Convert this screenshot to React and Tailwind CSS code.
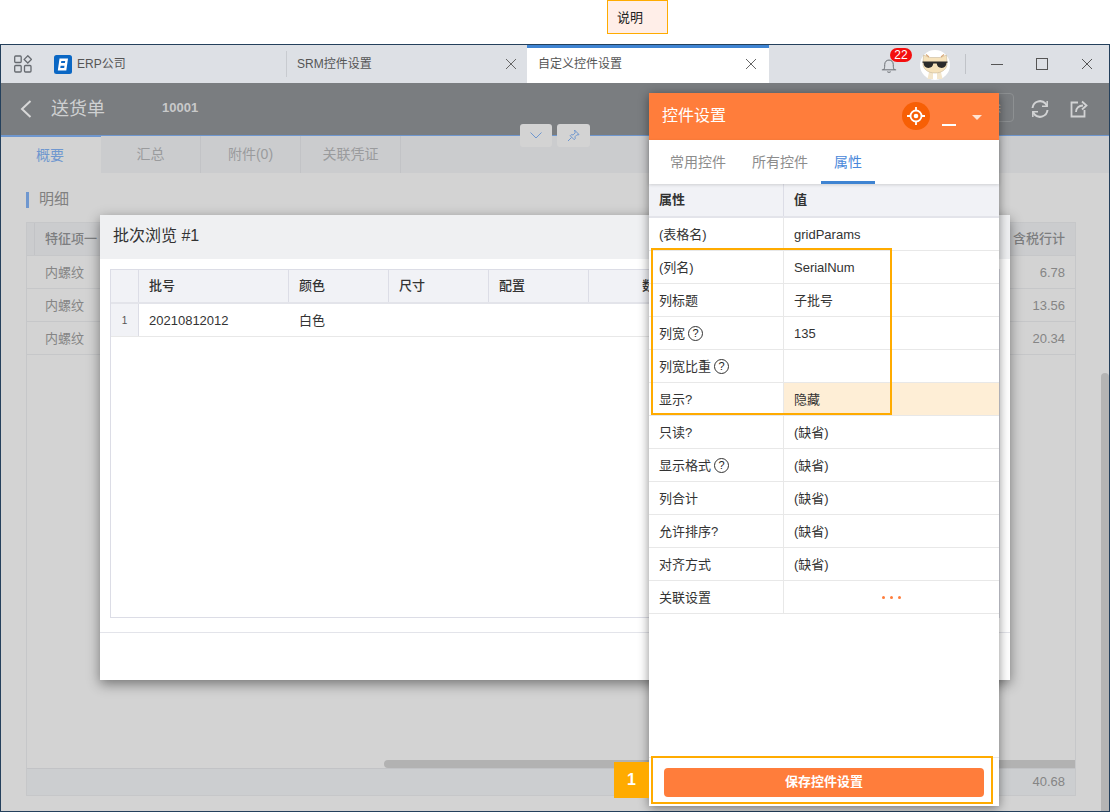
import React from "react";

const FONT = '"Liberation Sans","Noto Sans CJK SC",sans-serif';

const rows = [
  ["(表格名)", "gridParams"],
  ["(列名)", "SerialNum"],
  ["列标题", "子批号"],
  ["列宽", "135", true],
  ["列宽比重", "", true],
  ["显示?", "隐藏", false, true],
  ["只读?", "(缺省)"],
  ["显示格式", "(缺省)", true],
  ["列合计", "(缺省)"],
  ["允许排序?", "(缺省)"],
  ["对齐方式", "(缺省)"],
];

function Close({ className }) {
  return (
    <svg className={className} width="12" height="12" viewBox="0 0 12 12" fill="none" stroke="currentColor" strokeWidth="1">
      <path d="M1 1l10 10M11 1L1 11" />
    </svg>
  );
}

function AppsIcon() {
  return (
    <svg width="18" height="18" viewBox="0 0 18 18" fill="none" stroke="#666a70" strokeWidth="1.3">
      <rect x="0.7" y="1" width="6.5" height="6.5" rx="1" />
      <rect x="0.7" y="10.5" width="6.5" height="6.5" rx="1" />
      <rect x="10.5" y="10.5" width="6.5" height="6.5" rx="1" />
      <path d="M13.8 0.8l3.6 3.6-3.6 3.6-3.6-3.6z" />
    </svg>
  );
}

function Logo() {
  return (
    <svg width="18" height="19" viewBox="0 0 18 19">
      <rect width="18" height="19" rx="2.5" fill="#0a67c4" />
      <path d="M5.500 3.500h8.500l-1.700 12H3.800z" fill="#fff" />
      <path d="M7.300 5.900h3.900l-.3 2.100H7zM6.600 10.800h3.900l-.3 2.200H6.300z" fill="#0a67c4" />
    </svg>
  );
}

function Avatar() {
  return (
    <svg width="30" height="30" viewBox="0 0 30 30">
      <circle cx="15" cy="15" r="15" fill="#fff" />
      <path d="M9 22h12l1.500 7h-15z" fill="#f3e6cc" />
      <path d="M13 23h4v6h-4z" fill="#fff" />
      <path d="M3.500 5l6 2.500h11l6-2.500.5 8c.5 6-5 10-12 10S2.500 19 3 13z" fill="#f6e2bb" stroke="#bfae90" strokeWidth="0.500" />
      <path d="M6 4.500l3 2.500M24 4.500l-3 2.500" stroke="#d8a878" strokeWidth="1.200" />
      <path d="M2.500 11.500h25v1.300h-1c-.2 3.200-1.800 5.200-4.800 5.200-3.200 0-4.600-1.800-5-4.400h-3.400c-.4 2.600-1.800 4.400-5 4.400-3 0-4.600-2-4.800-5.200h-1z" fill="#2b2b2b" />
    </svg>
  );
}

function Help() {
  return (
    <span className="ml-[3px] inline-flex h-[15px] w-[15px] items-center justify-center rounded-full border-[1.5px] border-[#333] text-[11px] leading-none text-[#222]">
      ?
    </span>
  );
}

export default function App() {
  return (
    <div className="relative h-[812px] w-full overflow-hidden bg-white text-[13px] text-[#333]" style={{ fontFamily: FONT }}>
      {/* annotation above the window */}
      <div className="h-[44px] pl-[607px]">
        <div className="flex h-[34px] w-[61px] items-center border border-[#ffab00] bg-[#ffeee8] pl-[9px] pt-[1px] text-[13px] text-[#222]">说明</div>
      </div>

      {/* application window */}
      <div className="flex h-[768px] flex-col border border-[#24405c] bg-[#d3d3d3]">
        {/* tab bar */}
        <div className="flex h-[38px] shrink-0 items-center bg-[#dde0e5] text-[12px]">
          <div className="ml-[13px] flex w-[40px]"><AppsIcon /></div>
          <Logo />
          <span className="ml-[5px] w-[209px] text-[#555]">ERP公司</span>
          <div className="h-[26px] w-px bg-[#c8cbd0]" />
          <div className="flex h-full w-[240px] items-center pl-[10px] text-[#555]">
            <span className="flex-1">SRM控件设置</span>
            <Close className="mr-[10px] text-[#666]" />
          </div>
          <div className="flex h-full w-[242px] items-center border-t-[3px] border-[#3f84d2] bg-white pl-[11px] text-[#555]">
            <span className="flex-1 pb-[3px]">自定义控件设置</span>
            <Close className="mr-[12px] mb-[3px] text-[#666]" />
          </div>
          <div className="relative ml-[111px] h-full w-[20px]">
            <svg className="absolute left-[1px] top-[11px]" width="16" height="17" viewBox="0 0 18 19" fill="none" stroke="#666a70" strokeWidth="1.100">
              <path d="M1 15.500h16M3 15.500c1-1.500 1.200-3 1.200-6 0-3 2-5 4.800-5s4.800 2 4.800 5c0 3 .2 4.500 1.200 6M7 17.500c.5 1 3.500 1 4 0" />
            </svg>
            <span className="absolute left-[10px] top-[3px] flex h-[14px] w-[22px] items-center justify-center rounded-full bg-[#f40f0f] text-[12px] leading-none text-white">22</span>
          </div>
          <div className="ml-[20px] mt-[1px]"><Avatar /></div>
          <div className="ml-[15px] h-[20px] w-px bg-[#c0c3c8]" />
          <svg className="ml-[25px]" width="12" height="12" viewBox="0 0 12 12" stroke="#555" strokeWidth="1"><path d="M0 6.500h12" /></svg>
          <svg className="ml-[33px]" width="12" height="12" viewBox="0 0 12 12" fill="none" stroke="#555" strokeWidth="1"><rect x="0.500" y="0.500" width="11" height="11" /></svg>
          <Close className="ml-[33px] text-[#555]" />
        </div>

        {/* page header */}
        <div className="flex h-[52px] shrink-0 items-center bg-[#7a7d80] text-[#cfd0d1]">
          <svg className="ml-[19px]" width="12" height="18" viewBox="0 0 12 18" fill="none" stroke="#d8d8d8" strokeWidth="2"><path d="M10.500 1L2 9l8.500 8" /></svg>
          <span className="ml-[19px] text-[18px] leading-none">送货单</span>
          <span className="ml-[57px] pb-[2px] text-[13px] font-bold text-[#c8c9ca]">10001</span>
          <div className="flex-1" />
          <div className="mb-[3px] mr-[16px] flex h-[29px] items-center rounded-[4px] border border-[#8d9092] px-[12px] text-[13px] text-[#aeb0b1]">删除</div>
          <svg className="mr-[20px]" width="20" height="20" viewBox="0 0 20 20" fill="none" stroke="#d2d3d4" strokeWidth="2">
            <path d="M2.500 9A7.600 7.600 0 0 1 15.500 4.500L17 7" />
            <path d="M17.500 11A7.600 7.600 0 0 1 4.500 15.500L3 13" />
            <path d="M17.200 2v5.200H12M2.800 18v-5.200H8" strokeWidth="1.500" />
          </svg>
          <svg className="mr-[21px]" width="18" height="18" viewBox="0 0 18 18" fill="none" stroke="#d2d3d4" strokeWidth="1.800">
            <path d="M8 2.500H1.500v14h13V10" />
            <path d="M6 12c0-4 3-6.500 7-6.500M12 1.500l4.500 4-4.500 4" />
          </svg>
        </div>

        {/* tabs */}
        <div className="flex h-[38px] shrink-0 border-t border-[#6f97cf] bg-[#cbccce] text-[14px] text-[#9a9b9d]">
          <div className="-mt-px flex w-[100px] items-center justify-center border-t-2 border-[#6f97cf] bg-[#d3d3d3] pr-[2px] text-[#6f97cf]">概要</div>
          <div className="flex w-[100px] items-center justify-center border-r border-[#c2c3c6]">汇总</div>
          <div className="flex w-[100px] items-center justify-center border-r border-[#c2c3c6]">附件(0)</div>
          <div className="flex w-[100px] items-center justify-center border-r border-[#c2c3c6]">关联凭证</div>
        </div>

        {/* content */}
        <div className="relative flex min-h-0 flex-1 flex-col pl-[25px] pr-[33px] pt-[19px] pb-[15px]">
          <div className="flex h-[15px] shrink-0 items-center">
            <div className="h-[16px] w-[3px] bg-[#6f97cf]" />
            <span className="ml-[10px] text-[15px] text-[#808080]">明细</span>
          </div>
          <div className="relative mt-[15px] flex min-h-0 flex-1 flex-col border border-[#c6c7c9] text-[#858585]">
            <div className="flex h-[33px] shrink-0 border-b border-[#c6c7c9] bg-[#cbccce] font-medium text-[#7d7e80]">
              <div className="w-[8px] border-r border-[#c2c3c6]" />
              <div className="flex flex-1 items-center pl-[10px]">特征项一</div>
              <div className="flex items-center pr-[10px]">含税行计</div>
            </div>
            {["6.78", "13.56", "20.34"].map((v) => (
              <div key={v} className="flex h-[33px] shrink-0 items-center justify-between border-b border-[#c6c7c9] pl-[18px] pr-[10px] pt-[2px]">
                <span>内螺纹</span>
                <span>{v}</span>
              </div>
            ))}
            <div className="flex-1" />
            <div className="flex h-[27px] shrink-0 items-center justify-end border-t border-[#c2c3c6] bg-[#ccced0] pr-[10px]">40.68</div>
            <div className="absolute bottom-[27px] left-[357px] right-0 h-[8px] rounded-l-full bg-[#b2b2b2]" />
          </div>
          <div className="absolute bottom-0 right-0 top-[200px] w-[8px] rounded-t-md bg-[#b4b4b4]" />
        </div>
      </div>

      {/* collapse / pin buttons */}
      <div className="absolute left-[520px] top-[124px] flex gap-[5px]">
        <div className="flex h-[23px] w-[32px] items-center justify-center rounded-[3px] bg-[#d3d3d3]">
          <svg width="12" height="7" viewBox="0 0 12 7" fill="none" stroke="#6f97cf" strokeWidth="1"><path d="M0.500 0.500L6 6l5.500-5.500" /></svg>
        </div>
        <div className="flex h-[23px] w-[33px] items-center justify-center rounded-[3px] bg-[#d3d3d3]">
          <svg width="13" height="13" viewBox="0 0 13 13" fill="none" stroke="#6f97cf" strokeWidth="1">
            <path d="M7.500 1l4.500 4.500-1 .5-1-.3-2 2 .2 2-1 1-4-4 1-1 2 .2 2-2-.2-1zM4.500 8.500L1 12" />
          </svg>
        </div>
      </div>

      {/* batch dialog */}
      <div className="absolute left-[100px] top-[215px] flex h-[465px] w-[910px] flex-col bg-white shadow-[0_4px_12px_rgba(0,0,0,0.45)]">
        <div className="flex h-[44px] shrink-0 items-center bg-[#eff0f2] pb-[2px] pl-[13px] text-[16px] text-[#333]">批次浏览 #1</div>
        <div className="px-[10px] pt-[10px]">
          <div className="h-[349px] border border-[#dcdde6]">
            <div className="flex h-[34px] border-b-2 border-[#e3e4ea] bg-[#f1f2f6] font-medium text-[#333]">
              <div className="w-[28px] border-r border-[#dcdde6]" />
              <div className="flex w-[150px] items-center border-r border-[#dcdde6] pl-[10px]">批号</div>
              <div className="flex w-[100px] items-center border-r border-[#dcdde6] pl-[10px]">颜色</div>
              <div className="flex w-[100px] items-center border-r border-[#dcdde6] pl-[10px]">尺寸</div>
              <div className="flex w-[100px] items-center border-r border-[#dcdde6] pl-[10px]">配置</div>
              <div className="flex flex-1 items-center pl-[53px]">数量</div>
            </div>
            <div className="flex h-[33px] border-b border-[#e8e8e8]">
              <div className="flex w-[28px] items-center justify-center border-r border-[#dcdde6] bg-[#f1f2f6] pt-[1px] text-[10px] text-[#555]">1</div>
              <div className="flex w-[150px] items-center pl-[10px] pt-[1px]">20210812012</div>
              <div className="flex w-[100px] items-center pl-[10px] pt-[1px]">白色</div>
            </div>
          </div>
        </div>
        <div className="mt-[14px] border-t border-[#e3e4ea]" />
      </div>

      {/* control settings panel */}
      <div className="absolute left-[649px] top-[93px] flex h-[713px] w-[350px] flex-col bg-white shadow-[0_2px_10px_rgba(0,0,0,0.45)]">
        <div className="flex h-[47px] shrink-0 items-center bg-[#ff7d3b] pb-[2px] pl-[13px] text-white">
          <span className="flex-1 text-[16px]">控件设置</span>
          <div className="flex h-[28px] w-[28px] items-center justify-center rounded-full bg-[#f75f05]">
            <svg width="18" height="18" viewBox="0 0 18 18" fill="none" stroke="#fff" strokeWidth="1.800">
              <circle cx="9" cy="9" r="5.500" />
              <circle cx="9" cy="9" r="2.300" fill="#fff" stroke="none" />
              <path d="M9 0v3M9 15v3M0 9h3M15 9h3" />
            </svg>
          </div>
          <div className="ml-[12px] mt-[18px] h-[2px] w-[14px] bg-white" />
          <div className="ml-[16px] mr-[17px] mt-[4px] h-0 w-0 border-x-[5px] border-t-[5px] border-x-transparent border-t-[#ffe3d3]" />
        </div>
        <div className="z-10 flex h-[44px] shrink-0 bg-white text-[14px] text-[#8c8c8c] shadow-[0_1px_3px_rgba(0,0,0,0.15)]">
          <div className="ml-[21px] flex items-center">常用控件</div>
          <div className="ml-[26px] flex items-center">所有控件</div>
          <div className="ml-[13px] flex w-[54px] items-center justify-center border-b-[3px] border-[#3f84d2] pt-[3px] text-[#4a88da]">属性</div>
        </div>
        <div className="flex h-[34px] shrink-0 border-b-2 border-[#e3e4ea] bg-[#f1f2f6] font-bold text-[#333]">
          <div className="flex w-[135px] items-center border-r border-[#dcdde6] pl-[10px]">属性</div>
          <div className="flex items-center pl-[10px]">值</div>
        </div>
        {rows.map(([k, v, help, hl]) => (
          <div key={k} className="flex h-[33px] shrink-0 border-b border-[#e8e8e8] text-[#333]">
            <div className="flex w-[135px] items-center border-r border-[#e8e8e8] pl-[10px] pt-[1px]">
              {k}
              {help && <Help />}
            </div>
            <div className={`flex flex-1 items-center pl-[10px] pt-[1px] ${hl ? "bg-[#feeed6]" : ""}`}>{v}</div>
          </div>
        ))}
        <div className="flex h-[33px] shrink-0 border-b border-[#e8e8e8] text-[#333]">
          <div className="flex w-[135px] items-center border-r border-[#e8e8e8] pl-[10px] pt-[1px]">关联设置</div>
          <div className="flex flex-1 items-center justify-center gap-[5px] pt-[1px]">
            <span className="h-[3px] w-[3px] rounded-full bg-[#ff7d3b]" />
            <span className="h-[3px] w-[3px] rounded-full bg-[#ff7d3b]" />
            <span className="h-[3px] w-[3px] rounded-full bg-[#ff7d3b]" />
          </div>
        </div>
        <div className="flex-1" />
        <div className="h-[49px] shrink-0 border-t border-[#e8e8e8] px-[15px] pt-[10px]">
          <div className="flex h-[29px] items-center justify-center rounded-[4px] bg-[#ff7d3b] pb-[1px] font-bold text-white">保存控件设置</div>
        </div>
      </div>

      {/* annotation frames */}
      <div className="absolute left-[651px] top-[248px] h-[167px] w-[241px] border-2 border-[#ffab00]" />
      <div className="absolute left-[651px] top-[756px] h-[48px] w-[342px] border-2 border-[#ffab00]" />
      <div className="absolute left-[614px] top-[762px] flex h-[36px] w-[35px] items-center justify-center bg-[#ffab00] text-[16px] font-bold text-white">1</div>
    </div>
  );
}
